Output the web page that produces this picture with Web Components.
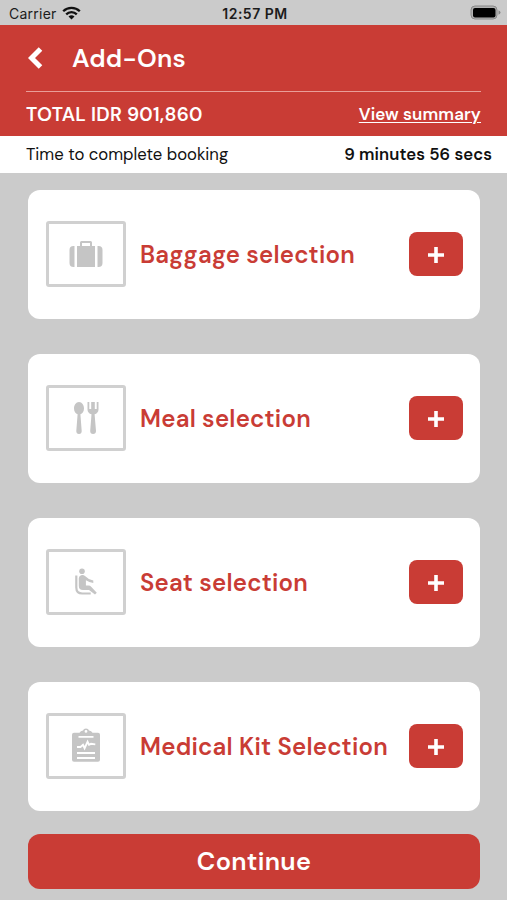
<!DOCTYPE html>
<html lang="en">
  <head>
    <meta charset="UTF-8" />
    <title>Add-Ons</title>
    <meta name="viewport" content="width=device-width, initial-scale=1.0" />
    <style>
      :root {
        --red: #c93c35;
        --grey: #cbcbcb;
      }

      body {
        margin: 0;
        height: 900px;
        overflow: hidden;
        background: var(--grey);
        font-family: "DM Sans", Inter, "Liberation Sans", sans-serif;
        font-optical-sizing: none;
        color: #111;
      }
    </style>
  </head>

  <body>
    <booking-screen></booking-screen>

    <script>
      // Registers an element whose shadow root is filled from an HTML string
      function define(name, html) {
        const template = document.createElement("template");
        template.innerHTML = html;
        customElements.define(
          name,
          class extends HTMLElement {
            constructor() {
              super();
              this.attachShadow({ mode: "open" }).appendChild(
                template.content.cloneNode(true)
              );
            }
          }
        );
      }

      // Phone status bar
      define(
        "status-bar",
        `
        <style>
          :host {
            display: grid;
            grid-template-columns: 1fr auto 1fr;
            align-items: center;
            box-sizing: border-box;
            height: 25px;
            padding: 2px 6px 0 9px;
            font-family: Inter, "Liberation Sans", sans-serif;
            font-size: 14px;
            line-height: 20px;
            letter-spacing: 0.25px;
            color: #1c1c1c;
          }
          .left { display: flex; align-items: center; gap: 5px; }
          .time { font-weight: 600; letter-spacing: 0.5px; }
          .battery { justify-self: end; }
          svg { display: block; position: relative; top: -1px; }
        </style>
        <div class="left">
          <span class="carrier">Carrier</span>
          <svg width="19" height="14" viewBox="0 0 19 14" fill="none" stroke="#111" stroke-width="2.3">
            <path d="M1.2 5.2a11.8 11.8 0 0 1 16.6 0" />
            <path d="M4.2 8.4a7.5 7.5 0 0 1 10.6 0" />
            <path d="M9.5 13.6 6.5 10.6a4.3 4.3 0 0 1 6 0z" fill="#111" stroke="none" />
          </svg>
        </div>
        <span class="time">12:57 PM</span>
        <svg class="battery" width="31" height="15" viewBox="0 0 31 15">
          <rect x="1" y="1" width="26" height="13" rx="4" fill="#b2b2b2" stroke="#888" />
          <rect x="3" y="3" width="22.500" height="9.500" rx="2" fill="#000" />
          <path d="M28.5 5.300v4.5q2-.6 2-2.2t-2-2.3z" fill="#888" />
        </svg>
      `
      );

      // Red header: title row, divider, total row
      define(
        "page-header",
        `
        <style>
          :host {
            display: flex;
            flex-direction: column;
            box-sizing: border-box;
            height: 111px;
            padding: 0 26px;
            background: var(--red);
            color: #fff;
          }
          .title {
            display: flex;
            align-items: center;
            gap: 28px;
            height: 66px;
            padding-left: 2px;
            border-bottom: 1px solid #e99e99;
          }
          h1 { margin: 0; font-size: 25.3px; font-weight: 600; letter-spacing: 0.25px; }
          .total {
            display: flex;
            align-items: center;
            justify-content: space-between;
            flex: 1;
            font-size: 19.2px;
            font-weight: 600;
            letter-spacing: 0.23px;
          }
          ::slotted(a) {
            color: #fff;
            font-size: 17px;
            letter-spacing: 0.1px;
            text-decoration: underline;
            text-underline-offset: 2px;
          }
        </style>
        <div class="title">
          <svg width="16" height="22" viewBox="0 0 16 22">
            <path d="M12.5 2 3.5 11l9 9" fill="none" stroke="#fff" stroke-width="5" />
          </svg>
          <h1><slot name="title"></slot></h1>
        </div>
        <div class="total">
          <slot name="total"></slot>
          <slot name="link"></slot>
        </div>
      `
      );

      // Countdown strip
      define(
        "time-strip",
        `
        <style>
          :host {
            display: flex;
            align-items: center;
            justify-content: space-between;
            box-sizing: border-box;
            height: 37px;
            padding: 0 15px 2px 26px;
            background: #fff;
            font-size: 16.7px;
          }
        </style>
        <slot></slot>
      `
      );

      // One add-on row: framed icon, label and plus button
      define(
        "addon-card",
        `
        <style>
          :host {
            display: flex;
            align-items: center;
            box-sizing: border-box;
            height: 129px;
            padding: 0 17px 1px 18px;
            border-radius: 12px;
            background: #fff;
          }
          .frame {
            display: grid;
            place-items: center;
            box-sizing: border-box;
            width: 80px;
            height: 66px;
            border: 3px solid #d0d0d0;
            border-radius: 3px;
          }
          .label {
            flex: 1;
            padding-left: 14px;
            color: var(--red);
            font-size: 24px;
            font-weight: 600;
            letter-spacing: 0.24px;
            white-space: nowrap;
          }
          button {
            display: grid;
            place-items: center;
            box-sizing: border-box;
            width: 54px;
            height: 44px;
            padding: 2px 1px 0 0;
            border: none;
            border-radius: 8px;
            background: var(--red);
          }
        </style>
        <div class="frame"><slot name="icon"></slot></div>
        <span class="label"><slot></slot></span>
        <button aria-label="Add">
          <svg width="18" height="18" viewBox="0 0 18 18">
            <path d="M9 1v16M1 9h16" stroke="#fff" stroke-width="3.6" />
          </svg>
        </button>
      `
      );

      define(
        "main-button",
        `
        <style>
          :host { display: block; }
          button {
            display: block;
            width: 100%;
            height: 55px;
            padding: 0;
            border: none;
            border-radius: 12px;
            background: var(--red);
            color: #fff;
            font: inherit;
            font-size: 25.3px;
            font-weight: 600;
            font-optical-sizing: none;
            letter-spacing: 0.3px;
          }
        </style>
        <button><slot></slot></button>
      `
      );

      define(
        "booking-screen",
        `
        <style>
          :host { display: block; }
          .list {
            display: flex;
            flex-direction: column;
            gap: 35px;
            padding: 17px 27px 0 28px;
          }
          main-button { margin: 23px 27px 0 28px; }
          svg { display: block; }
          b { font-weight: 600; letter-spacing: 0.08px; }
        </style>
        <status-bar></status-bar>
        <page-header>
          <span slot="title">Add-Ons</span>
          <span slot="total">TOTAL IDR 901,860</span>
          <a slot="link">View summary</a>
        </page-header>
        <time-strip>
          <span>Time to complete booking</span>
          <b>9 minutes 56 secs</b>
        </time-strip>
        <div class="list">
          <addon-card>
            <svg slot="icon" width="34" height="28" viewBox="0 0 34 28" fill="#c5c5c5">
              <path d="M4.5 6H5.5v21H4.5Q.5 27 .5 23V10Q.5 6 4.5 6zM28.500 6h1q4 0 4 4v13q0 4-4 4h-1z" />
              <path fill-rule="evenodd" d="M8 6h3V2.500Q11 1 12.500 1h9Q23 1 23 2.500V6h3v21H8zM13 6h8V3h-8z" />
            </svg>
            Baggage selection
          </addon-card>
          <addon-card>
            <svg slot="icon" width="28" height="36" viewBox="0 0 28 36" fill="#c5c5c5">
              <path d="M7 2c3 0 5 3 5 6.500 0 3-1.500 5-3.600 5.700L9.700 31a2.700 3 0 0 1-5.400 0l1.300-16.800C3.500 13.500 2 11.500 2 8.500 2 5 4 2 7 2z" />
              <path d="M15.500 2h1.800v7h1.900V2h3.600v7h1.900V2h1.800v7.500c0 2.500-1.600 4.200-3.900 4.800L24 31a2.900 3 0 0 1-5.800 0l1.300-16.700c-2.400-.6-4-2.300-4-4.800z" />
            </svg>
            Meal selection
          </addon-card>
          <addon-card>
            <svg slot="icon" width="24" height="28" viewBox="0 0 24 28" fill="#c5c5c5">
              <circle cx="8" cy="3.300" r="2.800" />
              <path d="M2.300 7.500v12q0 6 6 6h8.400" fill="none" stroke="#c5c5c5" stroke-width="2.200" />
              <path d="M7 7.200q2.400-.8 4 .9 3.500 3.700 8.300 4.500v2.400q-4.200-.5-7.400-2.700v5.300h2.500q1.800 0 3 1.300l5.400 5.900-1.800 1.600-6-4.400H9q-4.200 0-4.200-4V10.200q0-2 2.200-3z" />
            </svg>
            Seat selection
          </addon-card>
          <addon-card>
            <svg slot="icon" width="30" height="36" viewBox="0 0 30 36">
              <path fill="#c5c5c5" fill-rule="evenodd" d="M3 4.700h5.500q1-2 3.500-2.200Q12.500.4 15 .4t3 2.100q2.500.2 3.500 2.200H27q2 0 2 2V31.700q0 2-2 2H3q-2 0-2-2V6.700q0-2 2-2zM15 2a1.400 1.400 0 1 0 0 2.800A1.400 1.400 0 0 0 15 2z" />
              <path d="M7.500 8.900h15M6 25h18M6 30h18" stroke="#fff" stroke-width="1.900" />
              <path d="M6 19h3.500l2.500-2.200 1.600 3.400 3-6.500 1.400 3.100 2-1 4.300.6" fill="none" stroke="#fff" stroke-width="1.900" />
            </svg>
            Medical Kit Selection
          </addon-card>
        </div>
        <main-button>Continue</main-button>
      `
      );
    </script>
  </body>
</html>
